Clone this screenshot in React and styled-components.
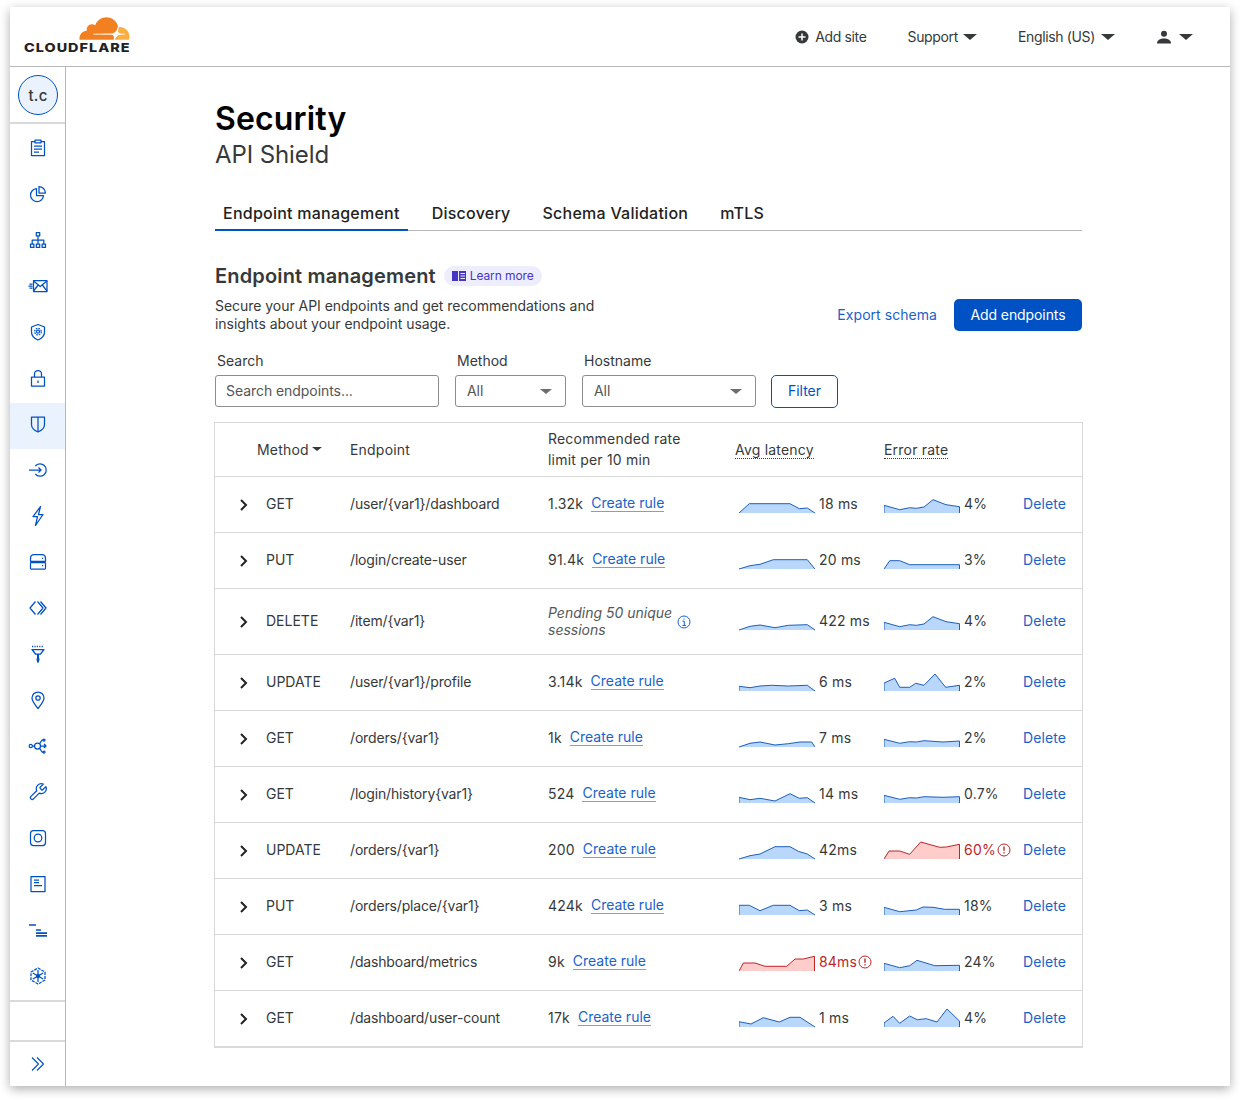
import React from 'react'
import styled, { createGlobalStyle } from 'styled-components'

const GlobalStyle = createGlobalStyle`
  html, body { margin: 0; padding: 0; background: #fff; }
  body { font-family: Inter, "Noto Sans", sans-serif; color: #36393a; }
  * { box-sizing: border-box; }
`

const BLUE = '#0051c3'
const LINK = '#1a62c9'
const RED = '#bd2527'

const Page = styled.div`
  width: 1240px;
  height: 1100px;
  padding: 7px 10px 14px;
  overflow: hidden;
`
const Frame = styled.div`
  height: 1079px;
  display: flex;
  flex-direction: column;
  background: #fff;
  box-shadow: 0 3px 10px rgba(0, 0, 0, .32);
`
const TopBar = styled.header`
  height: 60px;
  flex: none;
  display: flex;
  align-items: center;
  justify-content: space-between;
  padding: 0 37px 0 14px;
  border-bottom: 1px solid #b7b7b7;
`
const Logo = styled.div`
  width: 106px;
  display: flex;
  flex-direction: column;
  align-items: flex-end;
  gap: 2px;
  padding-bottom: 5px;
`
const LogoWord = styled.span`
  align-self: flex-start;
  font-size: 12px;
  line-height: 11px;
  font-weight: 800;
  letter-spacing: .85px;
  color: #222;
  white-space: nowrap;
  transform: scaleX(1.2);
  transform-origin: left center;
`
const TopNav = styled.nav`
  display: flex;
  align-items: center;
  font-size: 14px;
  letter-spacing: -.35px;
`
const TopItem = styled.span`
  display: flex;
  align-items: center;
  gap: ${p => p.$gap || 6}px;
  margin-left: ${p => p.$left || 0}px;
`
const Caret = styled.i`
  display: inline-block;
  width: 0;
  height: 0;
  margin-top: ${p => p.$drop || 0}px;
  border-left: ${p => p.$size || 7}px solid transparent;
  border-right: ${p => p.$size || 7}px solid transparent;
  border-top: ${p => (p.$size || 7) - 1}px solid ${p => p.$color || '#36393a'};
`
const Body = styled.div`
  flex: 1;
  display: flex;
  min-height: 0;
`
const Sidebar = styled.aside`
  width: 56px;
  flex: none;
  display: flex;
  flex-direction: column;
  border-right: 1px solid #b7b7b7;
`
const AvatarBox = styled.div`
  height: 57px;
  flex: none;
  display: flex;
  align-items: center;
  justify-content: center;
  border-bottom: 2px solid #d9d9d9;
`
const Avatar = styled.div`
  width: 40px;
  height: 40px;
  padding: 1px 0 0 1px;
  border-radius: 50%;
  border: 1px solid ${BLUE};
  background: #eaf2fd;
  display: flex;
  align-items: center;
  justify-content: center;
  font-size: 15px;
  font-weight: 500;
  letter-spacing: .3px;
  color: #36393a;
`
const NavList = styled.div`
  flex: none;
  margin-top: 3px;
  display: flex;
  flex-direction: column;
`
const NavItem = styled.div`
  height: 46px;
  padding-bottom: 4px;
  display: flex;
  align-items: center;
  justify-content: center;
  color: ${BLUE};
  background: ${p => (p.$active ? '#eaf2fd' : 'transparent')};
`
const Glyph = styled.svg`
  width: 20px;
  height: 20px;
  fill: none;
  stroke: currentColor;
  stroke-width: ${p => p.$stroke || 1.25};
  stroke-linejoin: round;
`
const SideSpacer = styled.div`
  height: 42px;
  flex: none;
  margin-top: -1px;
  border-top: 2px solid #d9d9d9;
  border-bottom: 2px solid #d9d9d9;
`
const Collapse = styled.div`
  flex: 1;
  display: flex;
  align-items: center;
  justify-content: center;
  color: ${BLUE};
`
const Main = styled.main`
  flex: 1;
  min-width: 0;
  padding: 32px 148px 0 149px;
`
const Title = styled.h1`
  margin: 0;
  font-size: 32px;
  line-height: 40px;
  font-weight: 600;
  letter-spacing: .15px;
  color: #000;
`
const Subtitle = styled.h2`
  margin: 0;
  font-size: 24px;
  line-height: 32px;
  font-weight: 400;
  letter-spacing: -.1px;
  color: #36393a;
`
const Tabs = styled.div`
  display: flex;
  margin-top: 25px;
  border-bottom: 1px solid #b7b7b7;
`
const Tab = styled.div`
  height: 35px;
  padding: 0 8px;
  margin-right: 16px;
  margin-bottom: -1px;
  display: flex;
  align-items: center;
  font-size: 16px;
  font-weight: 500;
  letter-spacing: .24px;
  color: #222;
  border-bottom: 2px solid ${p => (p.$active ? BLUE : 'transparent')};
`
const SectionHead = styled.div`
  display: flex;
  align-items: center;
  gap: 8px;
  margin-top: 31px;
`
const SectionTitle = styled.h3`
  margin: 0;
  font-size: 20px;
  line-height: 28px;
  font-weight: 600;
  letter-spacing: .16px;
  color: #36393a;
`
const Pill = styled.span`
  height: 20px;
  padding: 0 8px 1px;
  display: flex;
  align-items: center;
  gap: 4px;
  border-radius: 10px;
  background: #eeedfd;
  color: #4536c4;
  font-size: 12px;
  letter-spacing: -.1px;
`
const IntroRow = styled.div`
  display: flex;
  align-items: flex-end;
  justify-content: space-between;
  margin-top: 7px;
`
const Intro = styled.p`
  margin: 0;
  width: 400px;
  font-size: 14px;
  line-height: 18px;
  letter-spacing: -.04px;
`
const IntroActions = styled.div`
  display: flex;
  align-items: center;
  gap: 17px;
  margin-bottom: 2px;
`
const TextLink = styled.a`
  margin-top: -2px;
  font-size: 14px;
  letter-spacing: .05px;
  color: ${LINK};
`
const PrimaryButton = styled.button`
  width: 128px;
  height: 32px;
  padding: 0 0 2px;
  border: 0;
  border-radius: 5px;
  background: ${BLUE};
  color: #fff;
  font: inherit;
  font-size: 14px;
  letter-spacing: -.1px;
`
const Filters = styled.div`
  display: flex;
  align-items: flex-end;
  margin-top: 19px;
`
const Field = styled.div`
  width: ${p => p.$width}px;
  margin-right: 16px;
`
const FieldLabel = styled.div`
  font-size: 14px;
  line-height: 17px;
  margin: 0 0 6px 2px;
`
const InputBox = styled.div`
  height: 32px;
  display: flex;
  align-items: center;
  justify-content: space-between;
  padding: 0 13px 2px ${p => p.$left || 11}px;
  border: 1px solid #8d8d8d;
  border-radius: 3px;
  font-size: 14px;
  letter-spacing: -.06px;
  color: #555;
`
const FilterButton = styled.button`
  width: 67px;
  height: 33px;
  margin: 0 0 -1px -1px;
  padding: 0 0 2px;
  border: 1px solid ${BLUE};
  border-radius: 5px;
  background: #fff;
  color: ${BLUE};
  font: inherit;
  font-size: 14px;
`
const TableBox = styled.div`
  width: 869px;
  margin: 15px 0 0 -1px;
  border: 1px solid #d9d9d9;
`
const HeadRow = styled.div`
  height: 54px;
  display: grid;
  grid-template-columns: 42px 93px 198px 187px 149px 139px;
  align-items: center;
  border-bottom: 1px solid #d9d9d9;
  font-size: 14px;
  line-height: 21px;
  letter-spacing: .2px;
`
const HeadCell = styled.div`
  grid-column: ${p => p.$col};
  margin-top: -1px;
  display: flex;
  align-items: center;
  gap: 3px;
`
const Dotted = styled.span`
  margin-top: 2px;
  border-bottom: 1px dotted #36393a;
  line-height: 17px;
`
const Row = styled.div`
  height: ${p => (p.$tall ? 66 : 56)}px;
  display: grid;
  grid-template-columns: 51px 84px 198px 187px 149px 139px 60px;
  align-items: center;
  border-bottom: 1px solid #d9d9d9;
  font-size: 14px;
  letter-spacing: .2px;
`
const Expand = styled.div`
  display: flex;
  justify-content: flex-end;
  padding-right: 17px;
  color: #222;
`
const MethodCell = styled.div`
  margin-top: -2px;
  letter-spacing: 0;
`
const PathCell = styled.div`
  margin-top: -2px;
  letter-spacing: -.16px;
`
const RateCell = styled.div`
  display: flex;
  align-items: center;
  gap: 8px;
  margin-top: -2px;
`
const RuleLink = styled.a`
  color: ${LINK};
  line-height: 16px;
  letter-spacing: 0;
  border-bottom: 1px solid #6ea2ea;
`
const Pending = styled.div`
  width: 129px;
  margin-top: -2px;
  font-style: italic;
  font-size: 14px;
  line-height: 17px;
  letter-spacing: 0;
  color: #55585a;
`
const PendingCell = styled.div`
  display: flex;
  align-items: center;
  color: ${LINK};
`
const SparkCell = styled.div`
  display: flex;
  align-items: center;
  gap: 4px;
  padding-left: ${p => (p.$inset ? 4 : 0)}px;
  color: ${p => (p.$alert ? RED : 'inherit')};
  white-space: nowrap;
`
const SparkValue = styled.span`
  margin-top: -2px;
`
const Delete = styled.a`
  margin-top: -2px;
  letter-spacing: .1px;
  color: ${LINK};
`

const ROWS = [
  { method: 'GET', path: '/user/{var1}/dashboard', rate: '1.32k', lat: '18 ms', err: '4%',
    latPts: [[0, 0], [10.3, 9.3], [51, 9.3], [60.3, 4.3], [68.3, 5], [76, 0]],
    errPts: [[0, 7.7], [15.7, 3.3], [25.7, 5.3], [32.3, 4.7], [40, 6], [49, 13.3], [62, 8.3], [75.5, 6.3]] },
  { method: 'PUT', path: '/login/create-user', rate: '91.4k', lat: '20 ms', err: '3%',
    latPts: [[0, 0], [11, 3.3], [21, 4.7], [34.3, 9.3], [68.3, 9.3], [76, 0]],
    errPts: [[0, 0], [5.7, 8.3], [15.7, 8.3], [25.7, 4.3], [75.5, 4.3]] },
  { method: 'DELETE', path: '/item/{var1}', pending: true, lat: '422 ms', err: '4%',
    latPts: [[0, 0], [11, 3.7], [21, 5], [36, 2.3], [49.3, 4.7], [68.3, 5.3], [76, 0]],
    errPts: [[0, 7.7], [15.7, 3.3], [25.7, 5.3], [32.3, 4.7], [40, 6], [49, 13.3], [62, 8.3], [75.5, 6.3]] },
  { method: 'UPDATE', path: '/user/{var1}/profile', rate: '3.14k', lat: '6 ms', err: '2%',
    latPts: [[0, 4.7], [11, 3.3], [21, 5], [32.7, 5.7], [49.3, 5], [68.3, 5.7], [76, 0]],
    errPts: [[0, 8], [10.7, 12.7], [15.7, 3.7], [25.7, 3.7], [31.7, 7.7], [40, 5.7], [51, 17], [61.7, 3.7], [75.5, 5.7]] },
  { method: 'GET', path: '/orders/{var1}', rate: '1k', lat: '7 ms', err: '2%',
    latPts: [[0, 0], [11, 3.7], [21, 5], [36, 2], [49.3, 3.3], [61, 5], [72.7, 5], [76, 0]],
    errPts: [[0, 7.7], [15.7, 3.7], [25.7, 5.3], [32.3, 5], [40, 6.3], [59, 5], [75.5, 6]] },
  { method: 'GET', path: '/login/history{var1}', rate: '524', lat: '14 ms', err: '0.7%',
    latPts: [[0, 5.7], [11, 3.3], [21, 4.7], [36, 2], [51, 9.3], [60.3, 4.7], [68.3, 5.3], [76, 0]],
    errPts: [[0, 7.7], [15.7, 3.7], [25.7, 5.3], [32.3, 5], [40, 6.3], [59, 5.7], [75.5, 6.3]] },
  { method: 'UPDATE', path: '/orders/{var1}', rate: '200', lat: '42ms', err: '60%', errAlert: true,
    latPts: [[0, 0], [11, 3.3], [21, 5], [36, 12.3], [51, 12.3], [59.3, 7.7], [68.3, 5], [76, 0]],
    errPts: [[0, 0], [5, 8], [15.7, 8], [25.7, 4.7], [36.7, 17], [55.7, 11.7], [62.3, 12], [75.5, 14.7]] },
  { method: 'PUT', path: '/orders/place/{var1}', rate: '424k', lat: '3 ms', err: '18%',
    latPts: [[0, 9.7], [10.3, 9.7], [21, 4.3], [34.3, 9.7], [51, 9.7], [60.3, 4.3], [68.3, 5], [76, 0]],
    errPts: [[0, 7.7], [15.7, 3.3], [32.3, 5], [39, 8], [49, 7.7], [60.7, 5.7], [75.5, 5.7]] },
  { method: 'GET', path: '/dashboard/metrics', rate: '9k', lat: '84ms', err: '24%', latAlert: true,
    latPts: [[0, 0], [4.3, 8], [16, 8], [26, 4.7], [47.7, 4.7], [56, 12], [64.3, 12], [75.5, 14.7]],
    errPts: [[0, 7.7], [15.7, 3.3], [25.7, 5.3], [33, 10.7], [50.7, 5.3], [75.5, 5.7]] },
  { method: 'GET', path: '/dashboard/user-count', rate: '17k', lat: '1 ms', err: '4%',
    latPts: [[0, 5.3], [12, 3], [24.3, 9.3], [40.3, 5], [51, 9.7], [61, 9.7], [76, 0]],
    errPts: [[0, 4], [9, 10.7], [15.7, 3.7], [25.7, 11], [33.3, 7.3], [42.3, 8.3], [53, 5], [63, 18], [75.5, 6]] },
]

const NAV_ICONS = [
  <><path d="M7 3.5H3.5v14h13v-14H13" /><rect x="7" y="2.2" width="6" height="2.6" /><path d="M6 8h8M6 11h8M6 14h5" /></>,
  <><path d="M8.5 4.6a6.5 6.5 0 1 0 7 7h-7z" /><path d="M11 2.6a6.5 6.5 0 0 1 6.4 6.4H11z" /></>,
  <><rect x="8.3" y="2.5" width="3.4" height="3.4" /><path d="M10 5.9V14M4.2 14v-4h11.6v4" /><rect x="2.5" y="14" width="3.4" height="3.4" /><rect x="8.3" y="14" width="3.4" height="3.4" /><rect x="14.1" y="14" width="3.4" height="3.4" /></>,
  <><rect x="5.5" y="4.5" width="13.5" height="11" /><path d="M5.5 5l6.7 5.5L19 5M5.5 15l4.7-6M19 15l-4.7-6M1.5 8h3M.5 10h4M1.5 12h3" /></>,
  <><path d="M10 2.5l6.5 2.5v5c0 4-3 6.5-6.5 8-3.500-1.500-6.500-4-6.500-8V5z" /><circle cx="10" cy="9.700" r="1.500" /><circle cx="10" cy="9.700" r="3.300" strokeDasharray="1.600 1" /></>,
  <><rect x="3.500" y="9" width="13" height="9" /><path d="M6.500 9V6a3.500 3.500 0 0 1 7 0v3M10 12.500V15" /></>,
  <><path d="M3.500 3h13v7.500c0 3.500-3 6-6.500 7.500-3.500-1.500-6.500-4-6.500-7.500z" /><path d="M10 3v15" /></>,
  <><path d="M7.300 6a6.200 6.200 0 1 1 0 8" /><path d="M1 10h12M10.500 7.500L13 10l-2.500 2.500" /></>,
  <path d="M12.500 .5L5 10.500h4.500l-2 9 7.500-11h-4.500z" />,
  <><path d="M2.500 9.300V6.500c0-2.500 1.500-4 3.500-4h8c2 0 3.500 1.500 3.500 4v2.800z" /><rect x="2.500" y="10.500" width="15" height="6.500" rx=".8" /><path d="M14 6.300h1.200M14 13.700h1.200" /></>,
  <path d="M7.500 3.500L2 10l5.500 6.500M9.500 3.500L15 10l-5.500 6.500M12.500 3.500L18 10l-5.500 6.500" />,
  <><path d="M4 2.500h12" strokeDasharray="1.200 1.200" strokeWidth="1.600" /><path d="M4 5.500h12l-3.500 4.500h-5z" /><path d="M10 10v8.500M8.500 15.500h3" strokeWidth="2" /></>,
  <><path d="M10 18.500C7 14.500 4 11.500 4 8a6 6 0 0 1 12 0c0 3.500-3 6.500-6 10.500z" /><circle cx="10" cy="8" r="2.200" /></>,
  <><circle cx="2.800" cy="10" r="1.600" /><circle cx="9.500" cy="10" r="3" /><path d="M4.400 10h2.100M11.500 7.800L14 4h1.500M12.500 10H18M11.500 12.200L14 16h1.500M16 8l2 2-2 2" /><circle cx="16" cy="4" r="1" /><circle cx="16" cy="16" r="1" /></>,
  <g transform="scale(.83)"><path d="M14.700 6.300a1 1 0 0 0 0 1.400l1.600 1.600a1 1 0 0 0 1.400 0l3.770-3.770a6 6 0 0 1-7.940 7.940l-6.910 6.910a2.120 2.120 0 0 1-3-3l6.910-6.910a6 6 0 0 1 7.940-7.940l-3.760 3.760z" strokeWidth="1.500" /></g>,
  <><rect x="2.500" y="2.500" width="15" height="15" rx="3" /><circle cx="10" cy="10" r="3.800" /></>,
  <><rect x="3" y="2.500" width="14" height="15" /><path d="M6 6h5M6 8.500h5M6 11.500h8" /></>,
  <path d="M1 5h7M8 10h5M8 13.200h11M8 15.800h11" strokeWidth="1.700" />,
  <><path d="M10 2l7 4v8l-7 4-7-4V6z" strokeDasharray="3 1" /><circle cx="10" cy="10" r="1.500" fill="currentColor" /><path d="M10 4v12M4.800 7l10.400 6M15.200 7L4.800 13" /></>,
]

const Spark = ({ points, alert }) => {
  const line = points.map(([x, h]) => `${x},${18 - h}`).join(' ')
  const last = points[points.length - 1][0]
  return (
    <svg width="76" height="20" viewBox="0 0 76 20" style={{ flex: 'none' }}>
      <polygon points={`0,18 ${line} ${last},18`} fill={alert ? '#fecccb' : '#b9d6fb'} />
      <polyline points={`0,18 ${line} ${last},18`} fill="none" stroke={alert ? RED : '#1d5fb9'} strokeWidth="1" />
    </svg>
  )
}

const WarnIcon = () => (
  <svg width="14" height="14" viewBox="0 0 14 14" style={{ marginLeft: -3, marginTop: -2, flex: 'none' }}>
    <circle cx="7" cy="7" r="6" fill="none" stroke={RED} />
    <path d="M7 3.500v4.200M7 9.300v1.300" stroke={RED} strokeWidth="1.400" />
  </svg>
)

const Chevron = () => (
  <svg width="10" height="14" viewBox="0 0 10 14" fill="none" stroke="currentColor" strokeWidth="2">
    <path d="M2 2l5 5-5 5" />
  </svg>
)

const InfoIcon = () => (
  <svg width="14" height="14" viewBox="0 0 14 14" fill="none" stroke="currentColor">
    <circle cx="7" cy="7" r="6" />
    <path d="M5.500 6.200H7.300V10.500M5.500 10.500h3.400M7 3.400v1.200" />
  </svg>
)

const Book = () => (
  <svg width="14" height="12" viewBox="0 0 14 12" fill="#4536c4">
    <path d="M0 1h6v10H0z" />
    <path d="M7 1h7v10H7zM8.500 3v1H13V3zM8.500 5.500v1H13v-1zM8.500 8v1H13V8z" fillRule="evenodd" />
  </svg>
)

const CloudMark = () => (
  <svg width="51" height="24" viewBox="0 6 24 11.500">
    <path fill="#f38020" d="M16.509 16.845c.147-.507.091-.971-.155-1.316-.225-.316-.605-.499-1.062-.52l-8.659-.113a.156.156 0 0 1-.133-.071c-.028-.042-.035-.099-.021-.155.028-.084.112-.149.204-.156l8.736-.113c1.035-.049 2.16-.887 2.554-1.913l.499-1.302c.021-.056.029-.113.014-.168-.562-2.546-2.835-4.445-5.55-4.445-2.504 0-4.628 1.617-5.387 3.861-.493-.366-1.119-.562-1.794-.499-1.203.119-2.167 1.083-2.286 2.286-.028.31-.007.613.064.894C1.568 13.171 0 14.775 0 16.752c0 .175.014.352.035.527.014.083.085.148.169.148h15.981c.091 0 .176-.065.203-.156l.121-.426z" />
    <path fill="#faae40" d="M19.266 11.281c-.077 0-.161 0-.238.011-.057 0-.106.042-.127.098l-.338 1.174c-.148.507-.092.971.154 1.317.226.316.606.498 1.063.519l1.843.113c.056 0 .106.027.133.071.028.043.035.107.021.156-.028.084-.113.148-.204.155l-1.921.112c-1.041.049-2.158.887-2.553 1.914l-.14.359c-.029.071.021.141.098.141h6.598c.077 0 .147-.049.169-.126.112-.408.176-.837.176-1.28 0-2.603-2.125-4.727-4.734-4.734" />
  </svg>
)

const PlusCircle = () => (
  <svg width="14" height="14" viewBox="0 0 14 14">
    <circle cx="7" cy="7" r="6.500" fill="#36393a" />
    <path d="M7 3.500v7M3.500 7h7" stroke="#fff" strokeWidth="1.500" />
  </svg>
)

const UserIcon = () => (
  <svg width="14" height="14" viewBox="0 0 14 14" fill="#36393a">
    <circle cx="7" cy="3.700" r="3" />
    <path d="M0 13.500c0-3.500 3-5 7-5s7 1.500 7 5z" />
  </svg>
)

const TableRow = ({ row }) => (
  <Row $tall={row.pending}>
    <Expand><Chevron /></Expand>
    <MethodCell>{row.method}</MethodCell>
    <PathCell>{row.path}</PathCell>
    {row.pending ? (
      <PendingCell>
        <Pending>Pending 50 unique sessions</Pending>
        <InfoIcon />
      </PendingCell>
    ) : (
      <RateCell>
        {row.rate}
        <RuleLink>Create rule</RuleLink>
      </RateCell>
    )}
    <SparkCell $inset $alert={row.latAlert}>
      <Spark points={row.latPts} alert={row.latAlert} />
      <SparkValue>{row.lat}</SparkValue>
      {row.latAlert && <WarnIcon />}
    </SparkCell>
    <SparkCell $alert={row.errAlert}>
      <Spark points={row.errPts} alert={row.errAlert} />
      <SparkValue>{row.err}</SparkValue>
      {row.errAlert && <WarnIcon />}
    </SparkCell>
    <Delete>Delete</Delete>
  </Row>
)

const App = () => (
  <Page>
    <GlobalStyle />
    <Frame>
      <TopBar>
        <Logo>
          <CloudMark />
          <LogoWord>CLOUDFLARE</LogoWord>
        </Logo>
        <TopNav>
          <TopItem>
            <PlusCircle />Add site
          </TopItem>
          <TopItem $left={41} $gap={5}>Support<Caret /></TopItem>
          <TopItem $left={41}>English (US)<Caret /></TopItem>
          <TopItem $left={42} $gap={8}><UserIcon /><Caret /></TopItem>
        </TopNav>
      </TopBar>
      <Body>
        <Sidebar>
          <AvatarBox><Avatar>t.c</Avatar></AvatarBox>
          <NavList>
            {NAV_ICONS.map((icon, i) => (
              <NavItem key={i} $active={i === 6}>
                <Glyph viewBox="0 0 20 20">{icon}</Glyph>
              </NavItem>
            ))}
          </NavList>
          <SideSpacer />
          <Collapse>
            <Glyph viewBox="0 0 20 20" $stroke={1.1}><path d="M4 3.500l6.500 6.500L4 16.500M9 3.500l6.500 6.500L9 16.500" /></Glyph>
          </Collapse>
        </Sidebar>
        <Main>
          <Title>Security</Title>
          <Subtitle>API Shield</Subtitle>
          <Tabs>
            <Tab $active>Endpoint management</Tab>
            <Tab>Discovery</Tab>
            <Tab>Schema Validation</Tab>
            <Tab>mTLS</Tab>
          </Tabs>
          <SectionHead>
            <SectionTitle>Endpoint management</SectionTitle>
            <Pill><Book />Learn more</Pill>
          </SectionHead>
          <IntroRow>
            <Intro>Secure your API endpoints and get recommendations and insights about your endpoint usage.</Intro>
            <IntroActions>
              <TextLink>Export schema</TextLink>
              <PrimaryButton>Add endpoints</PrimaryButton>
            </IntroActions>
          </IntroRow>
          <Filters>
            <Field $width={224}>
              <FieldLabel>Search</FieldLabel>
              <InputBox $left={10}>Search endpoints...</InputBox>
            </Field>
            <Field $width={111}>
              <FieldLabel>Method</FieldLabel>
              <InputBox>All<Caret $size={6} $color="#6d6d6d" $drop={2} /></InputBox>
            </Field>
            <Field $width={174}>
              <FieldLabel>Hostname</FieldLabel>
              <InputBox>All<Caret $size={6} $color="#6d6d6d" $drop={2} /></InputBox>
            </Field>
            <FilterButton>Filter</FilterButton>
          </Filters>
          <TableBox>
            <HeadRow>
              <HeadCell $col={2}>Method<Caret $size={5} /></HeadCell>
              <HeadCell $col={3}>Endpoint</HeadCell>
              <HeadCell $col={4}><span>Recommended rate<br />limit per 10 min</span></HeadCell>
              <HeadCell $col={5}><Dotted>Avg latency</Dotted></HeadCell>
              <HeadCell $col={6}><Dotted>Error rate</Dotted></HeadCell>
            </HeadRow>
            {ROWS.map(row => <TableRow key={row.method + row.path} row={row} />)}
          </TableBox>
        </Main>
      </Body>
    </Frame>
  </Page>
)

export default App
